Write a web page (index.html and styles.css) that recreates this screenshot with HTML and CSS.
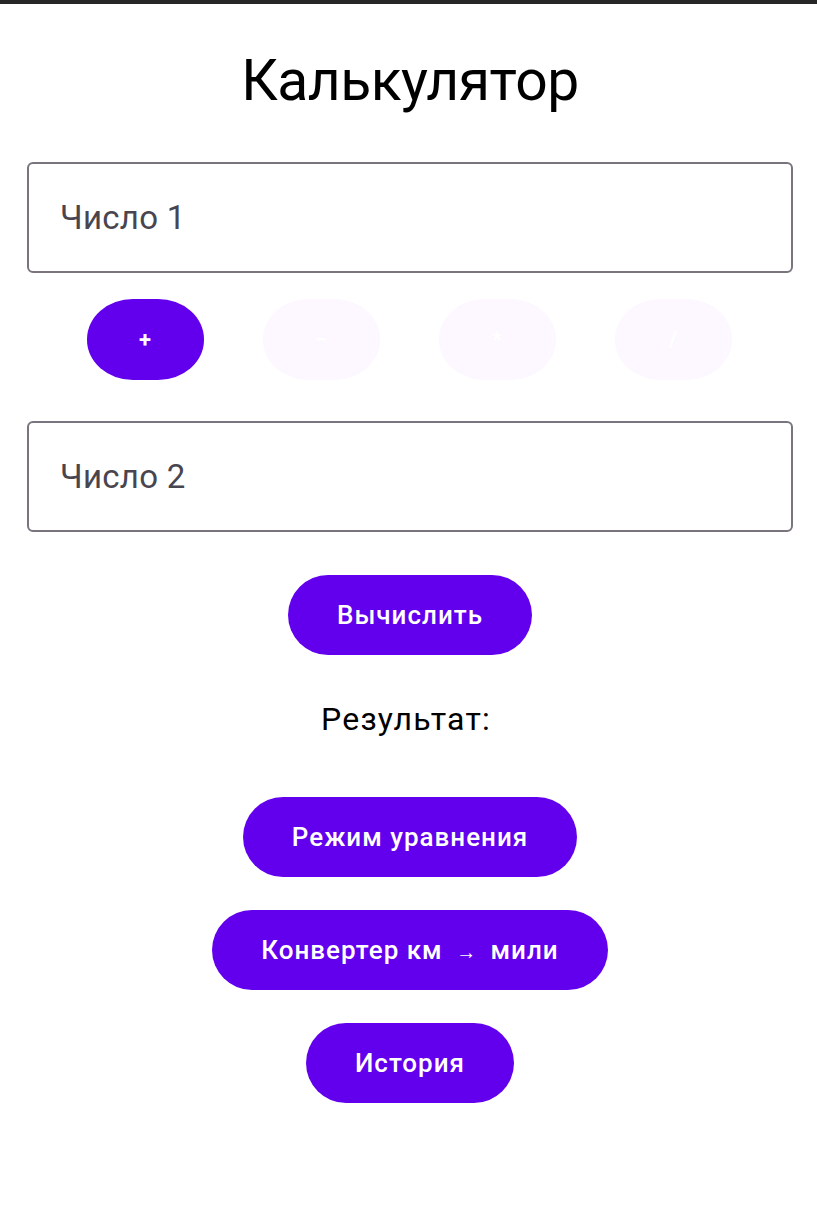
FILE: index.html
```html
<!DOCTYPE html>
<html lang="ru">
<head>
<meta charset="utf-8">
<title>Калькулятор</title>
<link rel="stylesheet" href="styles.css">
</head>
<body>
<div class="statusbar"></div>
<main class="screen">
  <h1 class="title">Калькулятор</h1>
  <div class="field"><span class="placeholder">Число 1</span></div>
  <div class="ops">
    <button class="op op-active">+</button>
    <button class="op">−</button>
    <button class="op">*</button>
    <button class="op">/</button>
  </div>
  <div class="field field-2"><span class="placeholder">Число 2</span></div>
  <button class="btn btn-calc">Вычислить</button>
  <p class="result">Результат:</p>
  <div class="actions">
    <button class="btn">Режим уравнения</button>
    <button class="btn">Конвертер км <span class="arrow">→</span> мили</button>
    <button class="btn">История</button>
  </div>
</main>
</body>
</html>
```
FILE: styles.css
```css
* { box-sizing: border-box; }
html, body { margin: 0; padding: 0; background: #ffffff; }
body { font-family: Roboto, "Noto Sans", "Liberation Sans", sans-serif; color: #000; }

.statusbar { height: 4px; background: #262626; }

.screen {
  display: flex;
  flex-direction: column;
  align-items: center;
  padding: 0 24px 0 27px;
}

.title {
  margin: 42px 0 0;
  font-size: 57px;
  font-weight: 400;
  line-height: 70px;
  letter-spacing: -0.5px;
  color: #000;
}

.field {
  align-self: stretch;
  height: 111px;
  margin-top: 46px;
  border: 2px solid #79747e;
  border-radius: 6px;
  display: flex;
  align-items: center;
  padding-left: 31px;
}
.field-2 { margin-top: 41px; }

.placeholder {
  font-size: 33px;
  color: #49454f;
  letter-spacing: 0.3px;
}

.ops {
  display: flex;
  justify-content: center;
  gap: 59px;
  margin-top: 26px;
  margin-right: 2px;
}

.op {
  width: 117px;
  height: 81px;
  border: none;
  border-radius: 46px / 40px;
  background: #fdf7ff;
  color: #ffffff;
  font-family: inherit;
  font-size: 22px;
  font-weight: 700;
  padding: 0;
}
.op-active { background: #6200ee; }

.btn {
  height: 80px;
  border: none;
  border-radius: 40px;
  background: #6200ee;
  color: #ffffff;
  font-family: inherit;
  font-size: 26px;
  font-weight: 500;
  padding: 0 49px;
  letter-spacing: 1px;
}
.btn-calc { margin-top: 43px; }

.arrow { font-size: 20px; margin: 0 6px; }

.result {
  margin: 46px 8px 0 0;
  font-size: 32px;
  line-height: 36px;
  letter-spacing: 1.2px;
}

.actions {
  display: flex;
  flex-direction: column;
  align-items: center;
  gap: 33px;
  margin-top: 60px;
}
```
